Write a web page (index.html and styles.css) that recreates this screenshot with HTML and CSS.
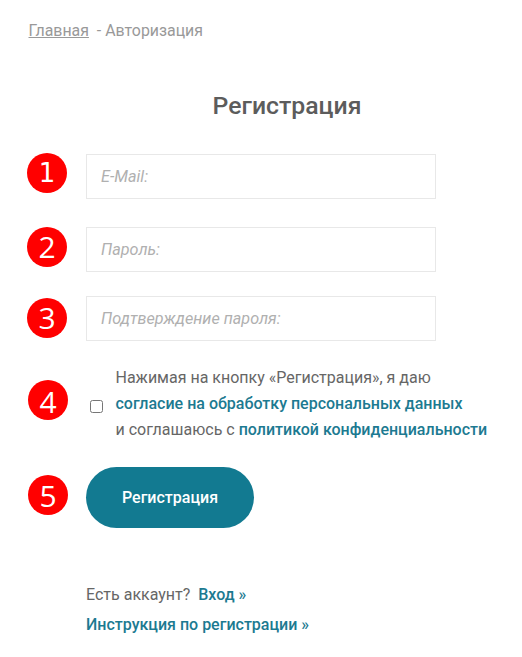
FILE: index.html
```html
<!DOCTYPE html>
<html lang="ru">
<head>
    <meta charset="UTF-8">
    <meta name="viewport" content="width=device-width, initial-scale=1.0">
    <title>Регистрация</title>
    <link rel="stylesheet" href="styles.css">
</head>
<body>

<div class="crumbs">
    <a href="#">Главная</a>&nbsp; - Авторизация
</div>

<div class="register">
    <h1 class="title">Регистрация</h1>

    <form class="form">
        <input type="text" class="field" placeholder="E-Mail:">
        <input type="password" class="field field-pass" placeholder="Пароль:">
        <input type="password" class="field field-confirm" placeholder="Подтверждение пароля:">

        <label class="agree">
            <input type="checkbox" class="agree-check">
            <span class="agree-text">
                Нажимая на кнопку «Регистрация», я даю<br>
                <a href="#">согласие на обработку персональных данных</a><br>
                и соглашаюсь с <a href="#">политикой конфиденциальности</a>
            </span>
        </label>

        <button type="button" class="submit">Регистрация</button>
    </form>

    <p class="login">Есть аккаунт?&nbsp; <a href="#">Вход »</a></p>
    <p class="help"><a href="#">Инструкция по регистрации »</a></p>
</div>

<!-- пометки поверх скриншота -->
<span class="mark mark-1">1</span>
<span class="mark mark-2">2</span>
<span class="mark mark-3">3</span>
<span class="mark mark-4">4</span>
<span class="mark mark-5">5</span>

</body>
</html>
```

FILE: styles.css
```css
/* Общие стили */
body {
    margin: 0;
    height: 657px;
    overflow: hidden;
    position: relative;
    background-color: #fff;
    color: #666;
    font-family: Roboto, "Liberation Sans", sans-serif;
    font-size: 16px;
}

a {
    color: #1c7a91;
    font-weight: 500;
    text-decoration: none;
}

/* Хлебные крошки */
.crumbs {
    padding: 21px 0 0 28.5px;
    line-height: 19px;
    font-size: 15.9px;
    color: #999;
}

.crumbs a {
    color: #999;
    font-weight: 400;
    text-decoration: underline;
}

/* Блок регистрации */
.register {
    width: 402px;
    margin-left: 86px;
}

.title {
    margin: 46px 0 0;
    font-size: 24.8px;
    line-height: 40px;
    font-weight: 500;
    text-align: center;
    color: #5c5c5c;
}

.form {
    display: flex;
    flex-direction: column;
    align-items: flex-start;
    margin-top: 28px;
}

.field {
    width: 350px;
    height: 45px;
    box-sizing: border-box;
    padding: 0 14px;
    border: 1px solid #e8e8e8;
    border-radius: 0;
    outline: none;
    font-family: inherit;
    font-size: 16.2px;
    font-style: italic;
}

.field::placeholder {
    color: #b0b0b0;
    opacity: 1;
}

.field-pass {
    margin-top: 28px;
}

.field-confirm {
    margin-top: 24px;
}

/* Согласие */
.agree {
    display: flex;
    align-items: center;
    margin-top: 24px;
}

.agree-check {
    width: 13px;
    height: 13px;
    margin: 4px 0 0 4px;
    flex-shrink: 0;
}

.agree-text {
    margin-left: 12.5px;
    line-height: 26px;
    white-space: nowrap;
}

.submit {
    width: 168px;
    height: 61px;
    margin-top: 24px;
    border: none;
    border-radius: 31px;
    background-color: #127a91;
    color: #fff;
    font-family: inherit;
    font-size: 16px;
    font-weight: 500;
}

.login {
    margin: 57px 0 0;
    line-height: 19px;
}

.help {
    margin: 11px 0 0;
    line-height: 19px;
}

/* Красные номера */
.mark {
    position: absolute;
    width: 40px;
    height: 40px;
    border-radius: 50%;
    background-color: #f00;
    color: #fff;
    font-family: "Open Sans", sans-serif;
    font-size: 30px;
    font-weight: 500;
    line-height: 40px;
    text-align: center;
}

.mark-1 { left: 27px; top: 153px; font-family: "DejaVu Sans", sans-serif; font-size: 26px; font-weight: 400; }
.mark-2 { left: 27px; top: 227px; }
.mark-3 { left: 27px; top: 298px; }
.mark-4 { left: 28px; top: 380px; line-height: 43px; }
.mark-5 { left: 28px; top: 475px; line-height: 42px; }
```
